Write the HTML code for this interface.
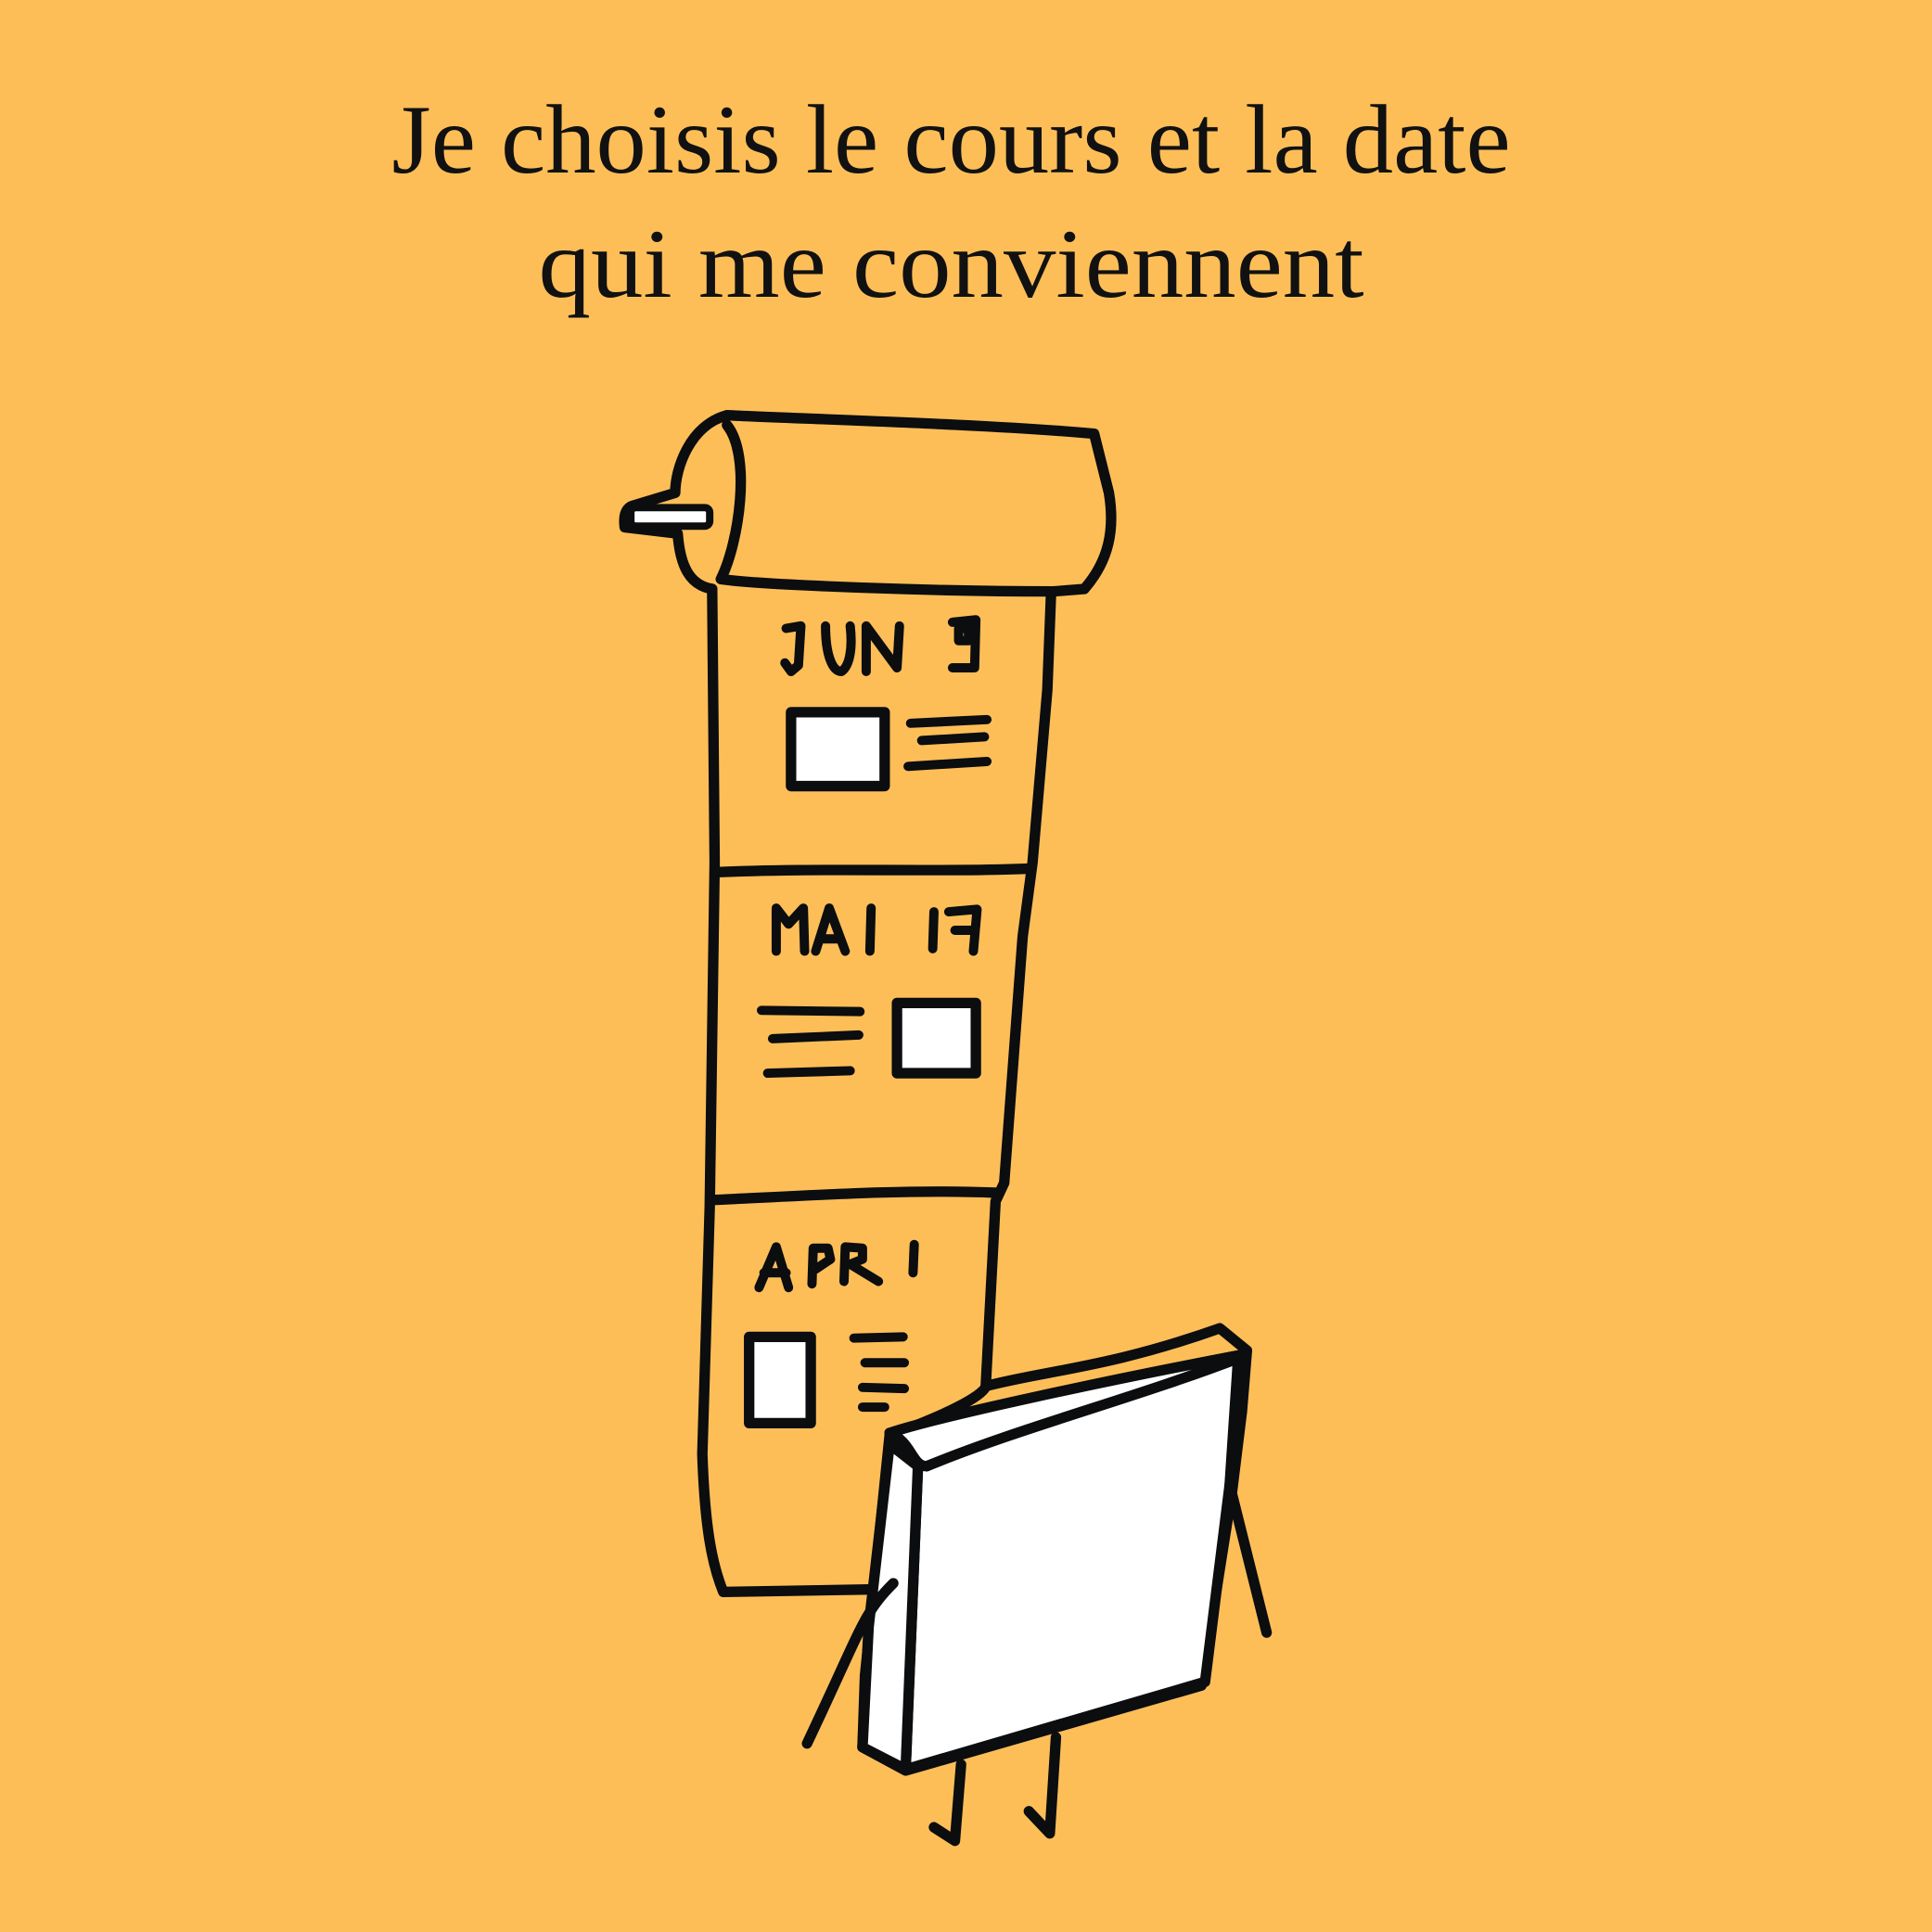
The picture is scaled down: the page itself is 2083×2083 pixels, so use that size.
<!DOCTYPE html>
<html><head><meta charset="utf-8"><style>
html,body{margin:0;padding:0;background:#FDBE58;}
svg{display:block}
</style></head><body>
<svg width="2083" height="2083" viewBox="0 0 1568 1568" xmlns="http://www.w3.org/2000/svg">
<rect width="1568" height="1568" fill="#FDBE58"/>
<g font-family="'Liberation Serif',serif" font-size="80" fill="#111">
<text x="318" y="140" textLength="908" lengthAdjust="spacingAndGlyphs">Je choisis le cours et la date</text>
<text x="437" y="241" textLength="670" lengthAdjust="spacingAndGlyphs">qui me conviennent</text>
</g>
<g fill="none" stroke="#0b0d0f" stroke-width="8.5" stroke-linecap="round" stroke-linejoin="round">
<!-- roll -->
<path d="M590,337 C650,340 800,344 888,352 L900,400 C905,430 900,455 880,478 L855,480"/>
<path d="M590,337 C560,345 548,380 548,400 L515,410 Q505,412 507,428 L550,433 C552,460 560,475 578,478"/>
<path d="M590,345 C610,370 600,440 585,470 C620,475 760,480 855,480"/>
<rect x="512" y="412" width="64" height="15" rx="4" fill="#fff" stroke-width="6"/>
<!-- body -->
<path d="M578,478 L580,700 L576,980 L570,1180 C572,1240 578,1270 587,1292 L705,1290"/>
<path d="M853,482 L850,560 L838,700 L830,760 L815,960 L808,975 L800,1125"/>
<path d="M580,708 C660,704 760,708 835,705"/>
<path d="M578,974 C660,970 740,965 808,968"/>
<g stroke-width="7.5">
<!-- JUN 9 -->
<path d="M638,510 L650,508 L648,540 L642,545 L637,538"/>
<path d="M670,508 C670,530 675,545 683,545 C690,540 692,525 690,508"/>
<path d="M703,545 L703,508 L728,542 L730,508"/>
<path d="M773,505 L792,503 L791,542 L773,542 M778,510 L786,510 L786,520 L778,520 Z"/>
<path d="M739,587 L801,584 M748,601 L799,598 M737,622 L801,618"/>
<!-- MAI 17 -->
<path d="M630,772 L630,737 L640,750 L652,737 L653,772"/>
<path d="M662,772 L673,737 L686,772 M666,762 L681,762"/>
<path d="M707,737 L706,772"/>
<path d="M758,740 L757,770 M770,740 L793,738 L790,772 M775,755 L789,755"/>
<path d="M618,820 L698,821 M627,843 L697,840 M623,871 L690,869"/>
<!-- APR 1 -->
<path d="M616,1045 L630,1012 L640,1045 M620,1033 L638,1033"/>
<path d="M659,1042 L660,1013 L672,1013 L674,1022 L662,1030"/>
<path d="M685,1040 L686,1012 L700,1013 L700,1022 L690,1026 L713,1040"/>
<path d="M742,1010 L741,1033"/>
<path d="M693,1086 L733,1085 M702,1106 L734,1106 M700,1126 L734,1127 M700,1142 L718,1142"/>
</g>
<rect x="642" y="578" width="76" height="60" fill="#fff"/>
<rect x="728" y="814" width="64" height="57" fill="#fff"/>
<rect x="608" y="1085" width="50" height="70" fill="#fff"/>
<!-- book -->
<path d="M800,1125 C850,1112 900,1110 990,1078 L1012,1096 L1008,1145 L1000,1210 L975,1368 L735,1437 L700,1418 L702,1360 L722,1165 C790,1140 800,1128 800,1125 Z" fill="#FDBE58"/>
<path d="M722,1163 C760,1150 900,1120 1005,1100 L998,1205 L978,1365 L735,1436 L745,1190 Z" fill="#fff"/>
<path d="M722,1163 C740,1170 740,1190 752,1190 C830,1158 920,1135 1006,1102"/>
<path d="M745,1190 L735,1436 L700,1418 L705,1320 L722,1172 Z" fill="#fff"/>
<path d="M998,1205 L1028,1325"/>
<path d="M725,1285 C700,1310 700,1320 655,1415"/>
<path d="M780,1432 L775,1494 L758,1483"/>
<path d="M857,1410 L852,1488 L835,1470"/>
</g>
</svg>
</body></html>
